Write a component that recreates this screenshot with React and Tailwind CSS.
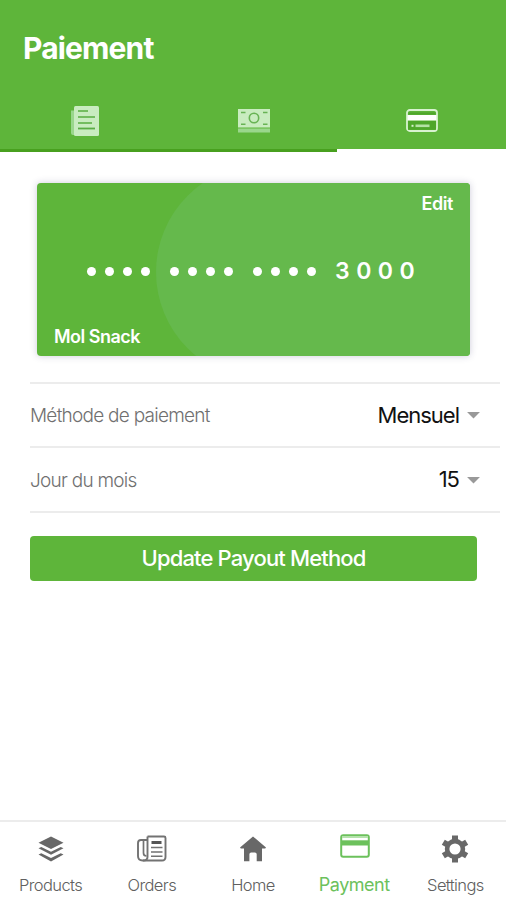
import { MdArrowDropDown } from "react-icons/md";

function BillsIcon() {
    return (
        <svg width="30" height="32" viewBox="0 0 30 32">
            <path d="M1 5.5h3V29h23.500v1H3a2 2 0 0 1-2-2z" fill="#9ad78c" />
            <rect x="4" y="1" width="25" height="30" rx="1.500" fill="#c9ecc0" />
            <g stroke="#74bd60" strokeWidth="1.800">
                <path d="M8 6h10M8 12h17M8 18h14" />
                <path d="M8 23.500h17" stroke="#5aad45" />
            </g>
        </svg>
    )
}

function CashIcon() {
    return (
        <svg width="34" height="26" viewBox="0 0 34 26">
            <path d="M1 20.500h32v4H1z" fill="#9ad78c" />
            <path d="M1 1h32v18.500H1z" fill="#c9ecc0" />
            <g fill="none" stroke="#68b354" strokeWidth="1.600">
                <circle cx="17" cy="10" r="4.700" />
                <path d="M4 4.500h4.500M26 4.500h4.500M4 16.300h4.500M26 16.300h4.500" />
            </g>
        </svg>
    )
}

function CardIcon() {
    return (
        <svg width="32" height="23" viewBox="0 0 32 23">
            <rect x="1" y="1" width="30" height="21" rx="2.800" fill="none" stroke="#d8f2d0" strokeWidth="1.800" />
            <path d="M1.500 6h29v5.500h-29z" fill="#fff" />
            <path d="M2 12h28v8.800H2zM2.500 3.500h27v2h-27z" fill="#4ea62a" />
            <path d="M5.500 16.800h2" stroke="#d8f2d0" strokeWidth="2" />
            <path d="M9.500 16.800h14" stroke="#b4e2a4" strokeWidth="2.600" />
        </svg>
    )
}

function LayersIcon() {
    return (
        <svg width="26" height="26" viewBox="0 0 26 26" fill="#686868">
            <path d="M13 .5 25.500 6.700 13 12.900.5 6.700z" />
            <path d="M.5 12.300 3.300 11 13 15.800 22.700 11l2.800 1.300L13 18.700z" />
            <path d="M.5 18.600l2.800-1.300L13 22.100l9.700-4.800 2.800 1.300L13 25.500z" />
        </svg>
    )
}

function NewspaperIcon() {
    return (
        <svg width="32" height="27" viewBox="0 0 32 27" fill="none" stroke="#727272" strokeWidth="1.900">
            <path d="M11.500 1.500H28q1.500 0 1.500 1.500V22q0 3.500-3.500 3.500H6.500Q2 25.500 2 21V8q0-3 3-3h6.500" />
            <path d="M11.500 1.500V22q0 3.500-4.500 3.500" />
            <path d="M7.500 5.500V18q0 3 3 3" strokeWidth="1.700" />
            <path d="M15.500 7.500h10" stroke="#555" strokeWidth="3" />
            <path d="M15 12.500h11.500M15 17h11.500M15 21.200h11.500" strokeWidth="1.400" />
        </svg>
    )
}

function HomeIcon() {
    return (
        <svg width="26" height="26" viewBox="0 0 26 26" fill="#686868">
            <path d="M13 .5 26 11.500l-.8 1H22v12.800h-5.300v-7q0-1.800-1.800-1.800h-3.700q-1.800 0-1.800 1.800v7H4V12.500H.8l-.8-1z" />
        </svg>
    )
}

function PaymentIcon() {
    return (
        <svg width="30" height="24" viewBox="0 0 30 24">
            <rect x="1.200" y="1.200" width="27.600" height="21.600" rx="2" fill="#fff" stroke="#6cc15c" strokeWidth="2" />
            <path d="M2 2h26v2H2z" fill="#b5e2ac" />
            <path d="M2 6.300h26v5.200H2z" fill="#6cc15c" />
        </svg>
    )
}

function SettingsIcon() {
    return (
        <svg width="28" height="28" viewBox="0 0 28 28" fill="none" stroke="#686868">
            <circle cx="14" cy="14" r="7.900" strokeWidth="4.600" />
            <g strokeWidth="6" strokeLinejoin="round">
                <path d="M14 .5v5M14 22.500v5" />
                <path d="M14 .5v5M14 22.500v5" transform="rotate(60 14 14)" />
                <path d="M14 .5v5M14 22.500v5" transform="rotate(120 14 14)" />
            </g>
        </svg>
    )
}

const tabs = [
    { id: "bills", icon: <BillsIcon /> },
    { id: "cash", icon: <CashIcon /> },
    { id: "card", icon: <CardIcon />, active: true },
]

const navItems = [
    { label: "Products", icon: <LayersIcon /> },
    { label: "Orders", icon: <NewspaperIcon /> },
    { label: "Home", icon: <HomeIcon /> },
    { label: "Payment", icon: <PaymentIcon />, active: true },
    { label: "Settings", icon: <SettingsIcon /> },
]

function SelectRow({ label, value }) {
    return (
        <div className="flex h-[64.5px] items-center justify-between border-b-2 border-[#ececec] pr-[11px]">
            <span className="pt-[3px] text-[19px] font-light tracking-[-0.74px] text-[#707070]">{label}</span>
            <button className="flex items-center text-[22px] tracking-[-1px] text-[#111]">
                <span className="pt-px">{value}</span>
                <MdArrowDropDown size={31} className="-ml-px text-[#999]" />
            </button>
        </div>
    )
}

export default function App() {
    return (
        <div className="flex h-[900px] w-[506px] flex-col bg-white font-['Inter',sans-serif]">
            <header className="flex h-[152px] flex-col justify-between bg-[#5eb53a]">
                <h1 className="pt-[27px] pl-[23px] text-[30px] leading-[42px] font-bold tracking-[-0.85px] text-white">Paiement</h1>
                <div className="flex h-[64px]">
                    {tabs.map((tab) => (
                        <button
                            key={tab.id}
                            className={`flex flex-1 items-center justify-center border-b-[3px] pt-[4px] pl-px ${tab.active ? "border-white" : "border-[#48a01f]"}`}
                        >
                            {tab.icon}
                        </button>
                    ))}
                </div>
            </header>

            <main className="flex-1">
                <section className="relative mt-[31px] ml-[37px] flex h-[173px] w-[433px] flex-col justify-between overflow-hidden rounded-[4px] bg-[#5eb53a] text-white shadow-[0_0_7px_rgba(60,50,110,0.25)]">
                    <div className="absolute -top-[19px] -right-px h-[216px] w-[315px] rounded-l-[108px] bg-[#65b94c]" />
                    <button className="relative self-end pt-[9px] pr-[17px] text-[18px] leading-6 font-semibold tracking-[-0.4px]">Edit</button>
                    <div className="relative flex items-center pl-[50px]">
                        {[0, 1, 2].map((group) => (
                            <div key={group} className="mt-[2px] mr-[20px] flex gap-[9px]">
                                {[0, 1, 2, 3].map((dot) => (
                                    <span key={dot} className="size-[9px] rounded-full bg-white" />
                                ))}
                            </div>
                        ))}
                        <span className="-ml-px text-[23px] leading-7 font-semibold tracking-[6.5px]">3000</span>
                    </div>
                    <p className="relative pb-[7px] pl-[17px] text-[18px] leading-6 font-semibold tracking-[-0.5px]">Mol Snack</p>
                </section>

                <div className="mt-[25.5px] ml-[30px] w-[470px] border-t-2 border-[#ececec]">
                    <SelectRow label="Méthode de paiement" value="Mensuel" />
                    <SelectRow label="Jour du mois" value="15" />
                </div>

                <button className="mt-[23.5px] ml-[30px] h-[45px] w-[447px] rounded-[4px] bg-[#5eb53a] text-[22px] font-medium tracking-[-0.85px] text-white">
                    Update Payout Method
                </button>
            </main>

            <nav className="flex h-[80px] border-t-2 border-[#ececec]">
                {navItems.map((item) => (
                    <button
                        key={item.label}
                        className={`flex flex-1 flex-col items-center ${item.active ? "text-[#6cc15c]" : "text-[#606060]"}`}
                    >
                        <span className={`flex items-center justify-center ${item.active ? "h-[48px] pl-px" : "h-[53px]"}`}>{item.icon}</span>
                        <span className={item.active ? "mt-[3px] text-[18px] leading-6 tracking-[-0.5px]" : "-mt-[2px] text-[16.500px] leading-6 font-light tracking-[-0.6px]"}>{item.label}</span>
                    </button>
                ))}
            </nav>
        </div>
    )
}
